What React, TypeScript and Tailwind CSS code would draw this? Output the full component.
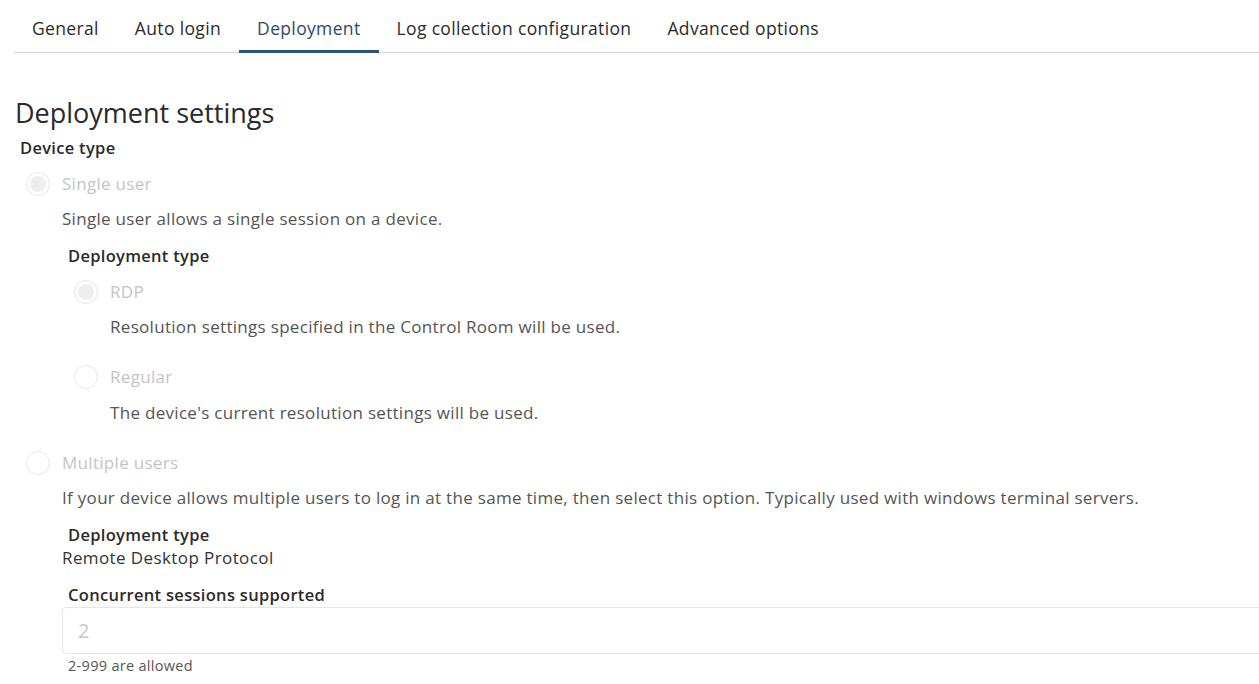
import React from 'react';

const tabs = ['General', 'Auto login', 'Deployment', 'Log collection configuration', 'Advanced options'];

const Radio: React.FC<{ checked?: boolean; label: string }> = ({ checked, label }) => (
  <div className="flex items-center h-[24px]">
    <span className="w-[24px] h-[24px] rounded-full border border-[#e6e6e6] bg-white flex items-center justify-center">
      {checked && <span className="w-[16px] h-[16px] rounded-full bg-[#eeeeee]" />}
    </span>
    <span className="ml-[12px] text-[17px] tracking-[0.3px] text-[#c4c4c4]">{label}</span>
  </div>
);

const body = 'text-[17px] leading-[22px] tracking-[0.3px] text-[#555]';
const label = 'text-[16.5px] leading-[22px] tracking-[0.3px] font-semibold text-[#2a2a2a]';

export default function App() {
  return (
    <div className="w-[1259px] h-[684px] overflow-hidden bg-white text-[#333]" style={{ fontFamily: '"Open Sans", "Liberation Sans", sans-serif' }}>
      {/* Tabs */}
      <div className="ml-[14px] flex border-b border-[#d4d4d4] h-[53px]">
        {tabs.map(t => (
          <div
            key={t}
            className={`px-[18px] pt-[17px] text-[17.5px] leading-[22px] tracking-[0.35px] ${t === 'Deployment' ? 'text-[#2c4a6b] border-b-[3px] border-[#2c5278] -mb-[1px]' : 'text-[#2b2b2b]'}`}
          >
            {t}
          </div>
        ))}
      </div>

      <div className="pl-[15px]">
        <h2 className="mt-[44px] text-[27px] leading-[32px] text-[#2a2a2a]">Deployment settings</h2>
        <div className={`ml-[5px] mt-[8px] ${label}`}>Device type</div>

        <div className="ml-[11px] mt-[13px]">
          <Radio checked label="Single user" />
          <div className={`ml-[36px] mt-[12px] ${body}`}>Single user allows a single session on a device.</div>

          <div className={`ml-[42px] mt-[15px] ${label}`}>Deployment type</div>
          <div className="ml-[48px] mt-[13px]">
            <Radio checked label="RDP" />
            <div className={`ml-[36px] mt-[12px] ${body}`}>Resolution settings specified in the Control Room will be used.</div>
            <div className="mt-[27px]">
              <Radio label="Regular" />
            </div>
            <div className={`ml-[36px] mt-[13px] ${body}`}>The device's current resolution settings will be used.</div>
          </div>

          <div className="mt-[27px]">
            <Radio label="Multiple users" />
          </div>
          <div className={`ml-[36px] mt-[12px] ${body}`}>
            If your device allows multiple users to log in at the same time, then select this option. Typically used with windows terminal servers.
          </div>

          <div className={`ml-[42px] mt-[15px] ${label}`}>Deployment type</div>
          <div className="ml-[36px] mt-[1px] text-[17px] leading-[22px] tracking-[0.4px] text-[#333]">Remote Desktop Protocol</div>

          <div className={`ml-[42px] mt-[15px] ${label}`}>Concurrent sessions supported</div>
          <div className="ml-[36px] mt-[1px] w-[1220px] h-[47px] border border-[#e6e6e6] rounded-[4px] flex items-center pl-[15px] text-[20px] text-[#c8c8c8]">2</div>
          <div className="ml-[42px] mt-[3px] text-[14.5px] leading-[18px] tracking-[0.3px] text-[#555]">2-999 are allowed</div>
        </div>
      </div>
    </div>
  );
}
